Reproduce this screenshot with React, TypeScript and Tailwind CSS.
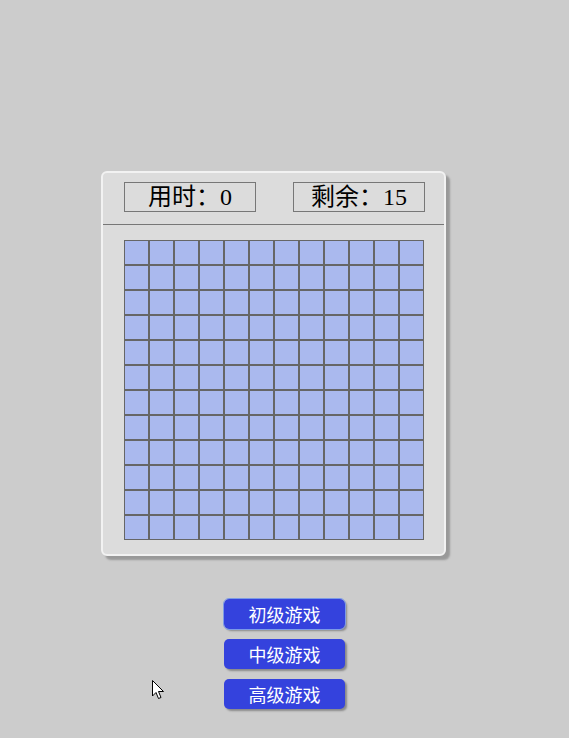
import React from "react";

const SIZE = 12;

export default function App() {
  const cells = Array.from({ length: SIZE * SIZE });
  return (
    <div className="relative min-h-[738px] w-full bg-[#cccccc] pt-[171px] font-['Liberation_Serif','Noto_Sans_CJK_SC',serif]">
      {/* 游戏面板 */}
      <div className="ml-[101px] w-[345px] rounded-[6px] border-2 border-[#f2f2f2] bg-[#dcdcdc] shadow-[4px_4px_2px_#999999]">
        <div className="flex justify-between pl-[21px] pr-[19px] pt-[9px] pb-[12px]">
          <div className="flex h-[30px] w-[132px] items-center justify-center border border-[#777777] text-[24px] leading-none text-black">
            用时：0
          </div>
          <div className="flex h-[30px] w-[132px] items-center justify-center border border-[#777777] text-[24px] leading-none text-black">
            剩余：15
          </div>
        </div>
        <div className="h-px bg-[#777777]" />
        <div className="pl-[21px] pt-[15px] pb-[14px]">
          <div className="grid w-[300px] grid-cols-[repeat(12,25px)]">
            {cells.map((_, i) => (
              <div key={i} className="h-[25px] w-[25px] border border-[#666666] bg-[#aab9ee]" />
            ))}
          </div>
        </div>
      </div>

      {/* 难度按钮 */}
      <div className="mt-[43px] flex flex-col items-center gap-[10px]">
        {["初级游戏", "中级游戏", "高级游戏"].map((label, i) => (
          <button
            key={label}
            className={
              "flex h-[30px] w-[121px] items-center justify-center rounded-[5px] bg-[#3442dd] text-[18px] text-white shadow-[2px_2px_2px_#8a8a8a] font-['Noto_Sans_CJK_SC',sans-serif] " +
              (i === 0 ? "outline outline-1 outline-[#7d9be6]" : "")
            }
          >
            {label}
          </button>
        ))}
      </div>

      {/* 鼠标指针 */}
      <svg className="absolute left-[152px] top-[680px]" width="13" height="20" viewBox="0 0 13 20">
        <path d="M0.5 0.5 L0.5 16 L4 12.5 L6.5 18.5 L9 17.5 L6.5 11.5 L11.5 11.5 Z" fill="#ffffff" stroke="#000000" strokeWidth="1" />
      </svg>
    </div>
  );
}
